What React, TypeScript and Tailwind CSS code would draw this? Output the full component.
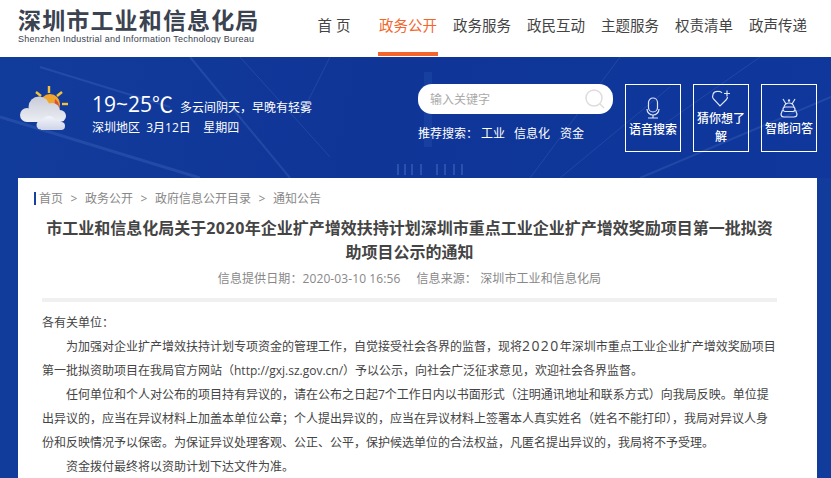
const navItems = ["首 页", "政务公开", "政务服务", "政民互动", "主题服务", "权责清单", "政声传递"]
const crumbs = ["首页", "政务公开", "政府信息公开目录", "通知公告"]

function Streaks() {
    return (
        <svg className="absolute inset-0 h-full w-full" viewBox="0 0 831 121" preserveAspectRatio="none">
            <g stroke="#7ea2e6" fill="none" opacity="0.16">
                <path d="M190 0 L290 121" strokeWidth="2" />
                <path d="M240 0 L330 100" />
                <path d="M330 0 L300 60" />
                <path d="M620 0 L530 121" />
                <path d="M670 30 L560 121" />
                <path d="M831 40 L640 121" strokeWidth="2" />
                <path d="M760 0 L660 70" />
                <path d="M0 60 L200 121" strokeWidth="3" />
                <path d="M40 10 L170 50" strokeWidth="2" />
            </g>
            <g fill="#6f9ae8" opacity="0.28">
                <rect x="397" y="107" width="2" height="11" />
                <rect x="404" y="107" width="2" height="11" />
                <rect x="411" y="107" width="2" height="11" />
                <rect x="420" y="107" width="2" height="11" />
                <rect x="436" y="107" width="2" height="11" />
                <rect x="444" y="107" width="2" height="11" />
                <rect x="453" y="107" width="2" height="11" />
                <rect x="461" y="107" width="2" height="11" />
            </g>
            <rect x="424" y="15" width="8" height="75" fill="#4c7fd6" opacity="0.14" />
        </svg>
    )
}

function WeatherIcon() {
    return (
        <svg width="50" height="46" viewBox="0 0 50 46">
            <defs>
                <linearGradient id="bigCloud" x1="0" y1="12" x2="0" y2="38" gradientUnits="userSpaceOnUse">
                    <stop offset="0" stopColor="#c9cbd8" />
                    <stop offset="1" stopColor="#eef0f6" />
                </linearGradient>
                <linearGradient id="smallCloud" x1="0" y1="31" x2="0" y2="46" gradientUnits="userSpaceOnUse">
                    <stop offset="0" stopColor="#f4f5fb" />
                    <stop offset="1" stopColor="#ccd2e6" />
                </linearGradient>
            </defs>
            <g stroke="#f2c23a" strokeWidth="2.4">
                <path d="M17 7 L22 11" />
                <path d="M30 1 V8" />
                <path d="M43 7 L38 11" />
                <path d="M43 19 H49" />
            </g>
            <circle cx="31" cy="19" r="10" fill="#f0a52e" />
            <path d="M36 14 a10 10 0 0 1 4 10 l-5 2 z" fill="#d9503a" />
            <g fill="url(#bigCloud)">
                <circle cx="8" cy="30" r="7" />
                <circle cx="20" cy="22" r="10.5" />
                <circle cx="33" cy="26" r="8" />
                <circle cx="41" cy="31" r="6" />
                <rect x="8" y="28" width="33" height="9" />
            </g>
            <g fill="url(#smallCloud)">
                <circle cx="22" cy="40" r="4.5" />
                <circle cx="30" cy="38" r="7" />
                <circle cx="38" cy="40" r="4.5" />
                <circle cx="42" cy="41" r="4" />
                <rect x="22" y="38" width="20" height="7" />
            </g>
        </svg>
    )
}

function MicIcon() {
    return (
        <svg width="18" height="22" viewBox="0 0 18 22" fill="none" stroke="#dfe6f7" strokeWidth="1.2">
            <rect x="4.5" y="1" width="9" height="14" rx="4.5" />
            <path d="M3 12 a6 6 0 0 0 12 0" />
            <path d="M9 18 V21 M4 21 H14" />
        </svg>
    )
}

function HeartIcon() {
    return (
        <svg width="20" height="18" viewBox="0 0 20 18" fill="none" stroke="#dfe6f7" strokeWidth="1.2">
            <path d="M11 3 a4 4 0 0 0 -4 -1.5 C2 1 0.5 6 2.5 9 L9 16 L15 10 C16 9 16.5 8 16.5 7" />
            <path d="M16 0.5 V6.5 M13 3.5 H19" />
        </svg>
    )
}

function RobotIcon() {
    return (
        <svg width="22" height="20" viewBox="0 0 22 20" fill="none" stroke="#dfe6f7" strokeWidth="1.2">
            <path d="M5 1 L8 6 M17 1 L14 6" />
            <circle cx="11" cy="2.5" r="0.6" />
            <path d="M6 9 Q7 5 11 5 Q15 5 16 9" />
            <rect x="5" y="9" width="12" height="4.5" rx="2.2" />
            <path d="M4.5 12 L3 16 Q3 19 6 19 H16 Q19 19 19 16 L17.5 12" />
        </svg>
    )
}

function ActionCard({ icon, label }: { icon: React.ReactNode; label: string }) {
    return (
        <div className="flex h-[68px] w-14 flex-col items-center justify-center border border-white text-center text-xs font-medium leading-[18px] text-white">
            <div className="flex justify-center">{icon}</div>
            <span className="mt-0.5 px-0.5">{label}</span>
        </div>
    )
}

export default function App() {
    return (
        <div className="h-[478px] w-[831px] overflow-hidden bg-white font-['Open_Sans','Noto_Sans_CJK_SC',sans-serif]">
            <header className="flex h-[57px] bg-white">
                <div className="ml-[18px] w-[286px] shrink-0 pt-[9px] font-['Liberation_Sans','Noto_Sans_CJK_SC',sans-serif]">
                    <div className="text-[23px] font-bold leading-[24px] tracking-[1.15px] text-[#3b4250]">深圳市工业和信息化局</div>
                    <div className="mt-[1px] h-[9px] overflow-hidden text-[9px] leading-[10px] tracking-[0.23px] text-[#3b4250]">Shenzhen Industrial and Information Technology Bureau</div>
                </div>
                <nav className="flex gap-[14px] text-[14.5px]">
                    {navItems.map((item) => (
                        <a
                            key={item}
                            className={item === "政务公开"
                                ? "flex h-[56px] w-[60px] items-start justify-center border-b-4 border-[#f4652c] pt-[15px] text-[#f4652c]"
                                : "flex w-[60px] items-start justify-center pt-[15px] text-[#444]"}
                        >
                            {item}
                        </a>
                    ))}
                </nav>
            </header>

            <section className="relative flex h-[121px] bg-[linear-gradient(100deg,#123c9c_0%,#0f3597_45%,#0f379c_100%)] text-white">
                <Streaks />
                <div className="relative ml-[19px] mt-[28px]">
                    <WeatherIcon />
                </div>
                <div className="relative ml-[23px] w-[326px] pt-[35px]">
                    <div className="flex items-baseline">
                        <span className="text-[21px] leading-6">19~25℃</span>
                        <span className="ml-[7px] text-xs">多云间阴天，早晚有轻雾</span>
                    </div>
                    <div className="mt-[2px] text-xs leading-5">深圳地区&nbsp;&nbsp;3月12日&nbsp;&nbsp;&nbsp;&nbsp;星期四</div>
                </div>
                <div className="relative w-[207px] pt-[27px]">
                    <div className="flex h-[30px] w-[195px] items-center justify-between rounded-[14px] bg-white pl-3 pr-2 text-xs text-[#aaa]">
                        <span className="pt-0.5">输入关键字</span>
                        <svg width="20" height="20" viewBox="0 0 20 20" fill="none" stroke="#ddd" strokeWidth="1.5">
                            <circle cx="9" cy="9" r="8" />
                            <path d="M15 15 L19 19" />
                        </svg>
                    </div>
                    <div className="mt-[10px] flex text-xs leading-5">
                        <span className="w-[63px]">推荐搜索：</span>
                        <a>工业</a>
                        <a className="ml-[9px]">信息化</a>
                        <a className="ml-[10px]">资金</a>
                    </div>
                </div>
                <div className="relative flex gap-3 pt-[27px]">
                    <ActionCard icon={<MicIcon />} label="语音搜索" />
                    <ActionCard icon={<HeartIcon />} label="猜你想了解" />
                    <ActionCard icon={<RobotIcon />} label="智能问答" />
                </div>
            </section>

            <section className="bg-[#123c9c] pl-[18px] pr-[14px]">
                <div className="h-[300px] overflow-hidden bg-white pl-[16px] pr-[40px] pt-[14px]">
                    <div className="flex items-center gap-[7px] border-l-[2px] border-[#1a3f9c] pl-[3px] text-xs leading-[13px] text-[#888]">
                        {crumbs.map((crumb, i) => (
                            <span key={crumb} className="flex items-center gap-[7px]">
                                {i > 0 && <span className="w-2 text-center">&gt;</span>}
                                {crumb}
                            </span>
                        ))}
                    </div>
                    <h1 className="ml-[8px] mt-[11px] text-center text-base font-bold leading-6 text-[#444]">
                        市工业和信息化局关于<span className="tracking-[0.5px]">2020</span>年企业扩产增效扶持计划深圳市重点工业企业扩产增效奖励项目第一批拟资助项目公示的通知
                    </h1>
                    <div className="ml-[8px] mt-[5px] text-center text-xs leading-5 tracking-[0.1px] text-[#888]">
                        信息提供日期：2020-03-10 16:56<span className="ml-4">信息来源：</span>&nbsp;深圳市工业和信息化局
                    </div>
                    <div className="ml-[8px] mt-[9px] h-1 bg-[#f0f0f0]" />
                    <article className="ml-[8px] mt-[9px] text-xs leading-6 text-[#444]">
                        <p>各有关单位：</p>
                        <p className="indent-6 whitespace-nowrap">为加强对企业扩产增效扶持计划专项资金的管理工作，自觉接受社会各界的监督，现将<span className="text-sm tracking-[1.4px]">2020</span>年深圳市重点工业企业扩产增效奖励项目</p>
                        <p>第一批拟资助项目在我局官方网站（http://gxj.sz.gov.cn/）予以公示，向社会广泛征求意见，欢迎社会各界监督。</p>
                        <p className="indent-6">任何单位和个人对公布的项目持有异议的，请在公布之日起7个工作日内以书面形式（注明通讯地址和联系方式）向我局反映。单位提出异议的，应当在异议材料上加盖本单位公章；个人提出异议的，应当在异议材料上签署本人真实姓名（姓名不能打印），我局对异议人身份和反映情况予以保密。为保证异议处理客观、公正、公平，保护候选单位的合法权益，凡匿名提出异议的，我局将不予受理。</p>
                        <p className="indent-6">资金拨付最终将以资助计划下达文件为准。</p>
                    </article>
                </div>
            </section>
        </div>
    )
}
